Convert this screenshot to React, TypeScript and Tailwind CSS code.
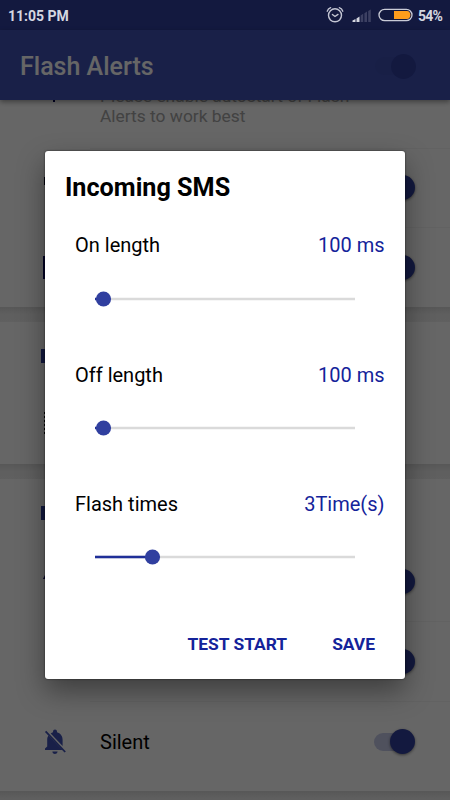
import type { ReactNode } from 'react'

type Setting = {
  label: string
  value: string
  progress: number
}

const SETTINGS: Setting[] = [
  { label: 'On length', value: '100 ms', progress: 8.5 },
  { label: 'Off length', value: '100 ms', progress: 8.5 },
  { label: 'Flash times', value: '3Time(s)', progress: 57.5 },
]

function Switch({ onHeader = false }: { onHeader?: boolean }) {
  return (
    <div className="relative flex h-[26px] w-[41px] shrink-0 items-center">
      <div className={`h-[18px] w-[34px] rounded-full ${onHeader ? 'bg-[#3d4eb0]' : 'bg-[#3f51b5]/30'}`} />
      <div
        className={`absolute right-0 h-[25px] w-[25px] rounded-full bg-[#303f9f] ${
          onHeader ? '' : 'shadow-[0_1px_3px_rgba(0,0,0,0.5)]'
        }`}
      />
    </div>
  )
}

function Row({ icon, label, className }: { icon: ReactNode; label?: string; className: string }) {
  return (
    <div className={`flex items-center pr-[35px] ${className}`}>
      <div className="flex w-[100px] shrink-0 items-center pl-[42px]">{icon}</div>
      <span className="flex-1 pt-px text-[20px] text-black">{label}</span>
      <Switch />
    </div>
  )
}

function Divider() {
  return <div className="ml-[90px] h-px bg-[#f5f5f5]" />
}

function Gap() {
  return <div className="h-[15px] shrink-0 bg-linear-to-b from-[#dadada] via-[#ededed] to-[#efefef]" />
}

function MessageIcon() {
  return (
    <svg width="26" height="24" viewBox="0 0 26 24" fill="#000060">
      <path d="M1 0h24v23H1z" />
    </svg>
  )
}

function PhoneIcon() {
  return (
    <svg width="26" height="24" viewBox="0 0 26 24" fill="#000020">
      <path d="M3 1h7l2 8H2V1z" />
    </svg>
  )
}

function RingIcon() {
  return (
    <svg width="26" height="24" viewBox="0 0 26 24" fill="#000060">
      <path d="M1 10L5 2h5v8z" />
    </svg>
  )
}

function CallIcon() {
  return (
    <svg width="26" height="24" viewBox="0 0 26 24" fill="#000060">
      <path d="M5 2h12v20H5z" />
    </svg>
  )
}

function VibrateIcon() {
  return (
    <svg width="26" height="24" viewBox="0 0 26 24" fill="none" stroke="#000" strokeWidth="2">
      <path d="M3 0v24" strokeDasharray="2 2" />
    </svg>
  )
}

function SilentIcon() {
  return (
    <svg width="24" height="26" viewBox="0 0 24 26" fill="#3f51b5">
      <path d="M8.7 4.6C9.500 3.900 10.200 3.500 11 3.300V2.600a2 2 0 0 1 4 0v.7c3.400 1 5.600 3.700 5.600 7.400v6.200z" />
      <path d="M6.500 6.500 20.500 21H3v-1.400l2.200-2v-7c0-1.600.4-3 1.300-4.100z" />
      <path d="M10.400 22.600h5.200a2.600 2.300 0 0 1-5.200 0z" />
      <path fill="none" stroke="#3f51b5" strokeWidth="1.8" d="M3.600 2.400 23.200 23" />
    </svg>
  )
}

function AlarmIcon() {
  return (
    <svg width="18" height="18" viewBox="0 0 18 18" fill="none" stroke="#c4c6d3" strokeLinecap="round">
      <circle cx="9" cy="9.3" r="6.5" strokeWidth="1.4" />
      <path d="M6.4 8.4 9 10.5l3-2.1" strokeWidth="1.3" />
      <path d="M1.2 5.3C1.7 3.6 3 2.3 4.7 1.7M16.8 5.3c-.5-1.7-1.8-3-3.5-3.6" strokeWidth="1.3" />
    </svg>
  )
}

function SignalIcon() {
  return (
    <svg width="20" height="14" viewBox="0 0 20 14">
      <path fill="#d5d7e0" d="M.5 13v-1.5L3.500 10v3zM4.500 13V9.500L7.500 7.500V13z" />
      <path fill="#3c4062" d="M8.600 13V6.400l2.600-1.600V13zM12.400 13V4.200L15 2.600V13zM16.200 13V2L18.800.4V13z" />
    </svg>
  )
}

function BatteryIcon() {
  return (
    <svg width="35" height="14" viewBox="0 0 35 14">
      <rect x="1" y="1.3" width="33" height="11.4" rx="5.7" fill="none" stroke="#c9cbd6" strokeWidth="1.3" />
      <path fill="#ff9d1c" d="M16 3h13c4.5 0 4.5 8 0 8H16z" />
    </svg>
  )
}

function StatusBar() {
  return (
    <div className="flex h-[30px] shrink-0 items-center bg-[#303f9f]">
      <div className="relative z-20 flex flex-1 items-center px-[8px] text-[#d5d7e0]">
        <span className="flex-1 pt-[2px] text-[14px] leading-none font-bold">11:05 PM</span>
        <AlarmIcon />
        <span className="ml-[8px] pt-[1px]">
          <SignalIcon />
        </span>
        <span className="ml-[6px]">
          <BatteryIcon />
        </span>
        <span className="ml-[5px] w-[24px] pt-px text-[14px] leading-none font-bold tracking-[-0.8px]">54%</span>
      </div>
    </div>
  )
}

function SliderSetting({ label, value, progress }: Setting) {
  return (
    <div className="h-[129.4px] pr-[20.5px] pl-[30px]">
      <div className="flex h-[30px] items-center justify-between text-[20px]">
        <span className="text-black">{label}</span>
        <span className="text-[#14239a]">{value}</span>
      </div>
      <svg className="mt-[30.4px] ml-[12px] block" width="276" height="16" viewBox="-8 -8 276 16">
        <path d="M0 0H260" stroke="#dadada" strokeWidth="2.5" />
        <path d={`M0 0H${progress}`} stroke="#1f2f98" strokeWidth="2.5" />
        <circle cx={progress} cy="0" r="7.6" fill="#303f9f" />
      </svg>
    </div>
  )
}

export default function App() {
  return (
    <div className="relative flex h-[800px] w-[450px] flex-col overflow-hidden bg-white font-['Roboto',sans-serif]">
      <StatusBar />
      <header className="relative flex h-[70px] shrink-0 items-center justify-between bg-[#3f51b5] pt-[2px] pr-[34px] pl-[20px] shadow-[0_2px_5px_rgba(0,0,0,0.4)]">
        <h1 className="pt-px text-[25px] font-medium text-white">Flash Alerts</h1>
        <Switch onHeader />
      </header>

      {/* Scrolled list */}
      <main className="flex flex-1 flex-col">
        <div className="flex h-[48px] shrink-0">
          <div className="w-[100px] pl-[53px]">
            <div className="h-[2px] w-[2px] bg-[#00005a]" />
          </div>
          <p className="-mt-[14px] text-[17.4px] leading-[20px] text-[#a5a5a5]">
            Please enable autostart of Flash
            <br />
            Alerts to work best
          </p>
        </div>
        <Divider />
        <Row icon={<PhoneIcon />} className="h-[78px] pb-px" />
        <Divider />
        <Row icon={<MessageIcon />} className="h-[79px]" />
        <Gap />

        <div className="h-[62px] pt-[27px] pl-[41px]">
          <div className="h-[14px] w-[20px] bg-[#303f9f]" />
        </div>
        <div className="flex h-[80px] items-center pl-[42px]">
          <VibrateIcon />
        </div>
        <Gap />

        <div className="h-[62px] pt-[27px] pl-[41px]">
          <div className="h-[14px] w-[20px] bg-[#303f9f]" />
        </div>
        <Row icon={<RingIcon />} className="h-[80px]" />
        <Divider />
        <Row icon={<CallIcon />} className="h-[79px]" />
        <Divider />
        <Row icon={<SilentIcon />} label="Silent" className="h-[89px] pb-[10px]" />
        <Gap />
      </main>

      {/* Dialog */}
      <div className="absolute inset-0 z-10 bg-black/60 px-[45px] pt-[150.6px]">
        <div className="flex h-[528.4px] flex-col rounded-[3px] bg-white shadow-[0_0_2px_rgba(0,0,0,0.7),0_12px_28px_rgba(0,0,0,0.4)]">
          <h2 className="h-[79.6px] pt-[22px] pl-[20px] text-[25.2px] leading-[30px] font-bold text-black">Incoming SMS</h2>
          {SETTINGS.map((setting) => (
            <SliderSetting key={setting.label} {...setting} />
          ))}
          <div className="flex justify-end gap-[45px] pt-[15px] pr-[30px] text-[17.4px] leading-[22px] font-bold text-[#14239a]">
            <button type="button">TEST START</button>
            <button type="button">SAVE</button>
          </div>
        </div>
      </div>
    </div>
  )
}
